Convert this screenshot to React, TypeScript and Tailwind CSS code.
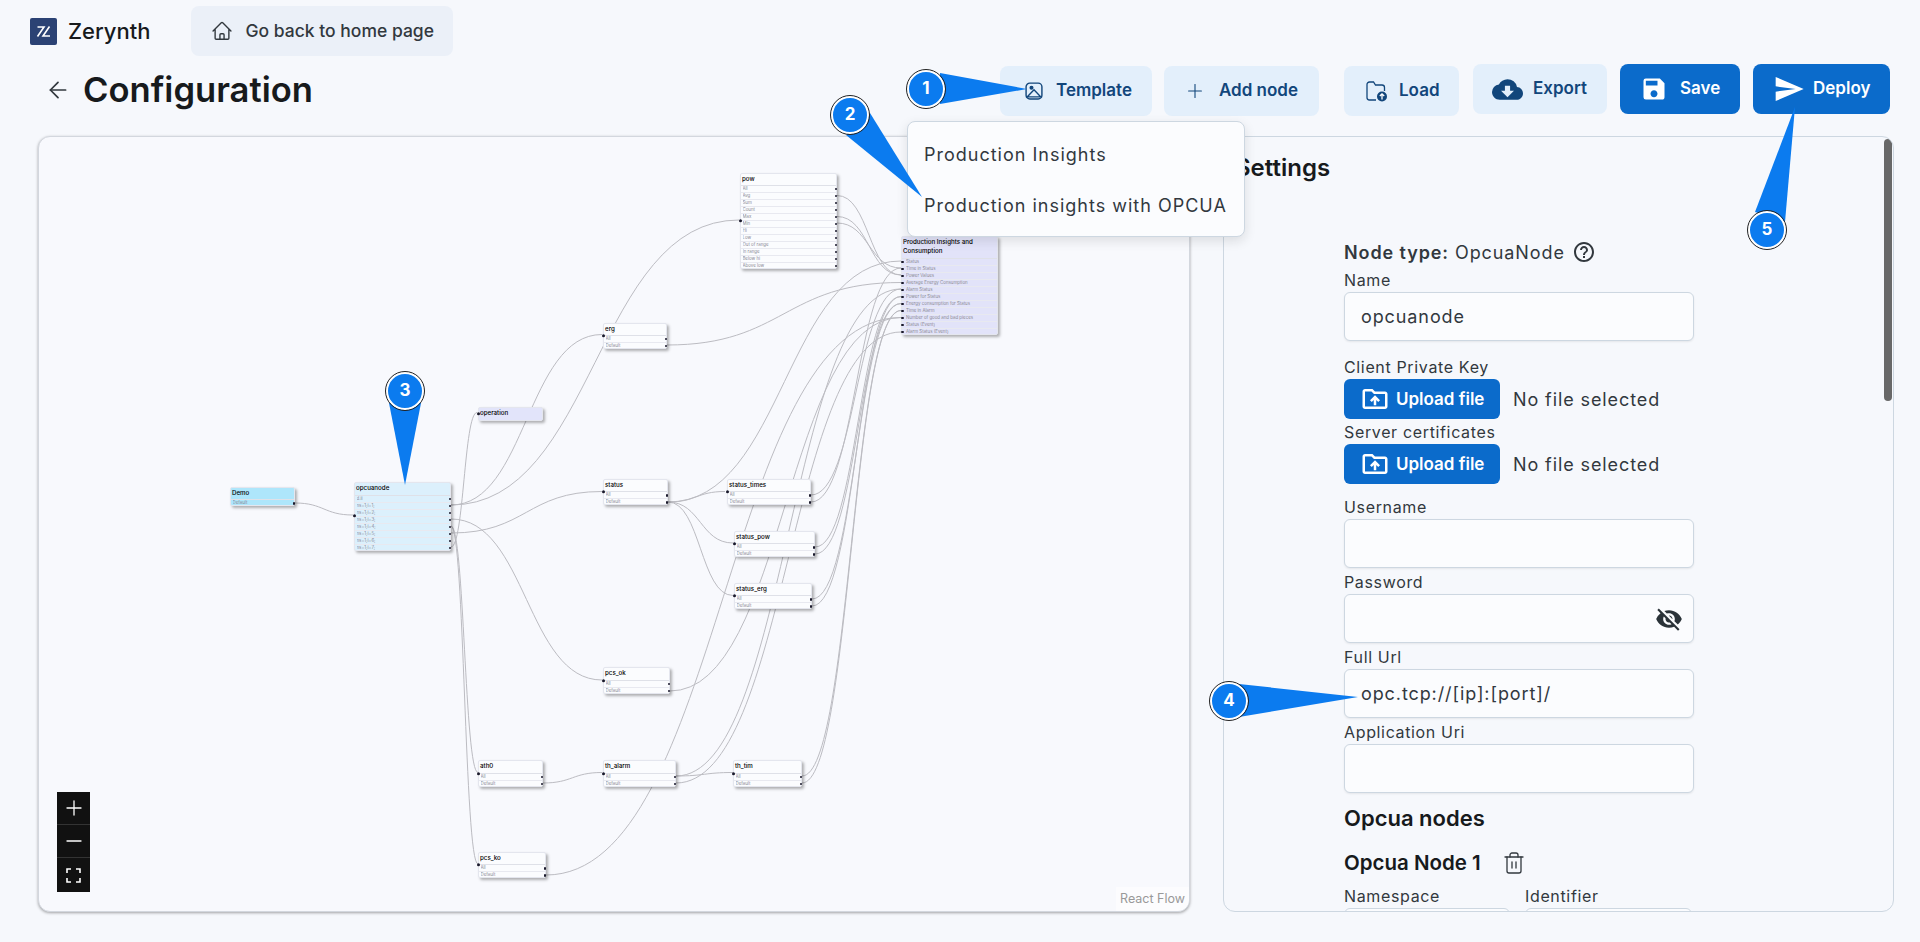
import React from "react";
import { ArrowLeft, Plus, Minus, Trash2 } from "lucide-react";
import { HiOutlineHome } from "react-icons/hi2";
import {
  MdCloudDownload,
  MdSave,
  MdSend,
  MdOutlineDriveFolderUpload,
  MdVisibilityOff,
  MdHelpOutline,
} from "react-icons/md";

type FlowNode = {
  name: string;
  x: number;
  y: number;
  w: number;
  head: number;
  rows: string[];
  tone: string;
  inY?: number;
  rowInputs?: boolean;
};

const allDefault = ["All", "Default"];

const nodes: FlowNode[] = [
  { name: "Demo", x: 230, y: 487, w: 65, head: 12, rows: ["Default"], tone: "bg-[#aee6fb]", inY: -1 },
  {
    name: "opcuanode",
    x: 354,
    y: 482,
    w: 97,
    head: 12.5,
    rows: ["d.ii", "ns=1;i=1;", "ns=1;i=2;", "ns=1;i=3;", "ns=1;i=4;", "ns=1;i=5;", "ns=1;i=6;", "ns=1;i=7;"],
    tone: "bg-[#dcf0fc]",
    inY: 33,
  },
  { name: "operation", x: 478, y: 407, w: 65, head: 12, rows: [], tone: "bg-[#e2e4fa]", inY: 5.5 },
  {
    name: "pow",
    x: 740,
    y: 173,
    w: 97,
    head: 11.5,
    rows: ["All", "Avg", "Sum", "Count", "Max", "Min", "Hi", "Low", "Out of range", "In range", "Below hi", "Above low"],
    tone: "bg-[#fbfcfe]",
    inY: 47,
  },
  { name: "erg", x: 603, y: 323, w: 64, head: 11.5, rows: allDefault, tone: "bg-[#fbfcfe]" },
  { name: "status", x: 603, y: 479, w: 65, head: 12, rows: allDefault, tone: "bg-[#fbfcfe]" },
  { name: "status_times", x: 727, y: 479, w: 84, head: 12, rows: allDefault, tone: "bg-[#fbfcfe]" },
  { name: "status_pow", x: 734, y: 531, w: 81, head: 12, rows: allDefault, tone: "bg-[#fbfcfe]" },
  { name: "status_erg", x: 734, y: 583, w: 78, head: 12, rows: allDefault, tone: "bg-[#fbfcfe]" },
  { name: "pcs_ok", x: 603, y: 667, w: 67, head: 12.5, rows: allDefault, tone: "bg-[#fbfcfe]" },
  { name: "ath0", x: 478, y: 760, w: 65, head: 12.5, rows: allDefault, tone: "bg-[#fbfcfe]" },
  { name: "th_alarm", x: 603, y: 760, w: 73, head: 12.5, rows: allDefault, tone: "bg-[#fbfcfe]" },
  { name: "th_tim", x: 733, y: 760, w: 69, head: 12.5, rows: allDefault, tone: "bg-[#fbfcfe]" },
  { name: "pcs_ko", x: 478, y: 852, w: 68, head: 12, rows: allDefault, tone: "bg-[#fbfcfe]" },
  {
    name: "Production Insights and Consumption",
    x: 901,
    y: 236,
    w: 97,
    head: 21.5,
    rows: [
      "Status",
      "Time in Status",
      "Power Values",
      "Average Energy Consumption",
      "Alarm Status",
      "Power for Status",
      "Energy consumption for Status",
      "Time in Alarm",
      "Number of good and bad pieces",
      "Status (Event)",
      "Alarm Status (Event)",
    ],
    tone: "bg-[#e2e3f9]",
    inY: -1,
    rowInputs: true,
  },
];

// source x, source y, target x, target y
const edges: number[][] = [
  [295, 503, 353, 515],
  [451, 505, 739, 220],
  [451, 505, 602, 334.5],
  [451, 533, 602, 491.5],
  [451, 519, 602, 680],
  [451, 547, 477, 412.5],
  [451, 526, 478, 772.5],
  [451, 526, 478, 864],
  [837, 195.5, 901, 275],
  [837, 216.5, 901, 275],
  [837, 223, 901, 268],
  [667, 345, 901, 282.5],
  [668, 502, 725, 491.5],
  [668, 502, 733, 543],
  [668, 502, 733, 595.5],
  [668, 502, 901, 261],
  [811, 495, 901, 289],
  [811, 502, 901, 268],
  [815, 547, 901, 296.5],
  [815, 554, 901, 303.5],
  [812, 599, 901, 303.5],
  [812, 606, 901, 296.5],
  [670, 691, 901, 317.5],
  [546, 875, 901, 317.5],
  [543, 783, 602, 772.5],
  [676, 776, 733, 772.5],
  [676, 783, 901, 332],
  [676, 776, 901, 289],
  [802, 776, 901, 310.5],
  [802, 783, 901, 310.5],
];

function edgePath([sx, sy, tx, ty]: number[]) {
  const off = (tx - sx) * 0.5;
  return `M${sx},${sy} C${sx + off},${sy} ${tx - off},${ty} ${tx},${ty}`;
}

const Dot = ({ className }: { className: string }) => (
  <span className={`absolute rounded-full bg-[#1a192b] ${className}`} />
);

const Node = ({ n }: { n: FlowNode }) => (
  <div
    className={`absolute rounded-[2px] border-[0.5px] border-[#e4e6ee] shadow-[2px_2px_3px_rgba(0,0,0,0.3)] ${n.tone}`}
    style={{ left: n.x - 39, top: n.y - 137, width: n.w }}
  >
    <div
      className={`px-[1px] text-[6.2px] leading-[9px] font-medium text-black ${n.rows.length ? "border-b border-[#dfe1e8]" : ""}`}
      style={{ height: n.head }}
    >
      {n.name}
    </div>
    {n.rows.map((r, i) => (
      <div
        key={r}
        className={`relative text-[4.4px] leading-[6px] text-[#8a8a94] ${i === n.rows.length - 1 ? "h-[5px]" : "h-[7px] border-b border-[#e8e9f0]"} ${n.rowInputs ? "pl-[4px]" : "pl-[1.5px]"}`}
      >
        <span className="block h-full overflow-hidden">{r}</span>
        {n.rowInputs ? (
          <Dot className="top-[2px] -left-[1px] size-[2.5px]" />
        ) : (
          <Dot className="top-[2px] -right-[1px] size-[2.5px]" />
        )}
      </div>
    ))}
    {n.inY !== -1 && (
      <span
        className="absolute -left-[2px] size-[3.4px] -translate-y-1/2 rounded-full bg-[#1a192b]"
        style={{ top: n.inY ?? n.head }}
      />
    )}
  </div>
);

const callouts = [
  { n: 1, x: 926, y: 89, tail: "940,73 1027,89 940,104" },
  { n: 2, x: 850, y: 115, tail: "870,113 922,197 846,135" },
  { n: 3, x: 405, y: 391, tail: "389,403 405,485 421,403" },
  { n: 4, x: 1229, y: 701, tail: "1239,684 1358,697 1239,717" },
  { n: 5, x: 1767, y: 230, tail: "1755,212 1795,107 1785,222" },
];

const Input = ({ value, children }: { value?: string; children?: React.ReactNode }) => (
  <div className="flex h-[49px] w-[350px] items-center justify-between rounded-[6px] border border-[#cdd7e1] bg-[#fbfcfe] px-[16px] text-[18px] tracking-[0.9px] text-[#32383e] shadow-[0_1px_2px_rgba(21,21,21,0.08)]">
    <span>{value}</span>
    {children}
  </div>
);

const Label = ({ children, className = "" }: { children: React.ReactNode; className?: string }) => (
  <div className={`h-[24px] text-[16px] leading-[24px] tracking-[0.65px] text-[#32383e] ${className}`}>{children}</div>
);

const UploadRow = () => (
  <div className="flex h-[40px] items-center gap-[13px]">
    <div className="flex h-[40px] w-[156px] items-center gap-[6px] rounded-[6px] bg-[#0b6bcb] pl-[16px] text-[17px] font-semibold text-white">
      <MdOutlineDriveFolderUpload size={30} />
      <span className="pt-[1px]">Upload file</span>
    </div>
    <span className="text-[18px] tracking-[0.9px] text-[#32383e]">No file selected</span>
  </div>
);

const softBtn =
  "flex h-[50px] items-center rounded-[8px] bg-[#e3effb] text-[17px] font-semibold text-[#12467b]";
const solidBtn =
  "flex mt-[-2px] h-[50px] items-center rounded-[8px] bg-[#0b6bcb] text-[17px] font-semibold text-white";

export default function App() {
  return (
    <div className="relative h-[942px] w-[1920px] overflow-hidden bg-[#f6f8fc] font-['Inter',sans-serif] text-[#171a1c]">
      {/* top bar */}
      <header className="flex h-[62px] items-center pl-[30px]">
        <svg width="27" height="27" viewBox="0 0 27 27" className="shrink-0">
          <rect width="27" height="27" rx="2" fill="#2b4274" />
          <path d="M7.5 9 H14 L7.5 18.5 M19.5 8.5 L13 18 H20" fill="none" stroke="#fff" strokeWidth="1.6" />
        </svg>
        <span className="ml-[11px] text-[22px] font-medium">Zerynth</span>
        <div className="ml-[40px] flex h-[50px] w-[262px] items-center gap-[13px] rounded-[8px] bg-[#ebf0f8] pl-[20px] text-[17.5px] font-medium text-[#32383e]">
          <HiOutlineHome size={22} />
          <span>Go back to home page</span>
        </div>
      </header>

      {/* title + actions */}
      <div className="mt-[4px] flex h-[50px] items-center pl-[45px]">
        <ArrowLeft size={26} strokeWidth={1.6} className="mb-[3px] text-[#32383e]" />
        <h1 className="mb-[3px] ml-[12px] text-[34.6px] font-semibold">Configuration</h1>
        <div className="mr-[30px] ml-auto flex items-start">
          <div className={`${softBtn} w-[152px] gap-[12px] pl-[24px]`}>
            <svg width="20" height="20" viewBox="0 0 24 24" fill="none" stroke="currentColor" strokeWidth="1.7">
              <rect x="2.5" y="2.5" width="19" height="19" rx="4.5" />
              <circle cx="9" cy="8" r="1.6" fill="currentColor" />
              <path d="M4 19 L12 10.5 L20 19 Z" />
            </svg>
            <span>Template</span>
          </div>
          <div className={`${softBtn} ml-[12px] w-[155px] gap-[13px] pl-[20px]`}>
            <Plus size={22} strokeWidth={1.2} />
            <span>Add node</span>
          </div>
          <div className={`${softBtn} ml-[25px] w-[115px] gap-[11px] pl-[22px]`}>
            <svg width="22" height="21" viewBox="0 0 22 21" fill="none" stroke="currentColor" strokeWidth="1.3">
              <path d="M10 19 H3.5 A2.5 2.5 0 0 1 1 16.5 V3.5 A2.5 2.5 0 0 1 3.5 1 H7.5 L9.5 4 H16 A2.5 2.5 0 0 1 18.5 6.5 V10" />
              <circle cx="16" cy="15.5" r="5" fill="currentColor" stroke="none" />
              <path d="M16 18.5 V13 M13.8 15 L16 12.8 L18.2 15" stroke="#fff" />
            </svg>
            <span>Load</span>
          </div>
          <div className={`${softBtn} mt-[-2px] ml-[14px] w-[134px] gap-[10px] pl-[19px]`}>
            <MdCloudDownload size={31} />
            <span>Export</span>
          </div>
          <div className={`${solidBtn} ml-[13px] w-[120px] gap-[12px] pl-[20px]`}>
            <MdSave size={28} />
            <span>Save</span>
          </div>
          <div className={`${solidBtn} ml-[13px] w-[137px] gap-[8px] pl-[20px]`}>
            <MdSend size={32} />
            <span>Deploy</span>
          </div>
        </div>
      </div>

      {/* main */}
      <main className="mt-[20px] flex h-[776px] gap-[33px] pl-[38px]">
        <section className="relative h-full w-[1152px] overflow-hidden rounded-[12px] border border-[#d3d7de] bg-[#f8f9fd] shadow-[0_1px_3px_rgba(0,0,0,0.35)]">
          <svg className="absolute -top-px -left-px" width="1152" height="776" viewBox="38 136 1152 776" fill="none">
            {edges.map((e, i) => (
              <path key={i} d={edgePath(e)} stroke="#bcbcc2" strokeWidth="1" />
            ))}
          </svg>
          {nodes.map((n) => (
            <Node key={n.name} n={n} />
          ))}

          <div className="absolute top-[655px] left-[18px] flex w-[33px] flex-col bg-[#111] text-white">
            <div className="flex h-[33px] items-center justify-center border-b border-[#333]">
              <Plus size={24} strokeWidth={1.3} />
            </div>
            <div className="flex h-[33px] items-center justify-center border-b border-[#333]">
              <Minus size={24} strokeWidth={1.3} />
            </div>
            <div className="flex h-[34px] items-center justify-center">
              <svg width="15" height="15" viewBox="0 0 15 15" fill="none" stroke="#fff" strokeWidth="1.6">
                <path d="M1 5 V1 H5 M10 1 H14 V5 M14 10 V14 H10 M5 14 H1 V10" />
              </svg>
            </div>
          </div>

          <div className="absolute right-0 bottom-0 bg-white/50 px-[4px] py-[4px] text-[12.5px] leading-[16px] text-[#999]">
            React Flow
          </div>
        </section>

        <aside className="relative h-full w-[671px] overflow-hidden rounded-[12px] border border-[#cdd7e1]">
          <div className="absolute top-[2px] right-[1px] h-[262px] w-[8px] rounded-full bg-[#686868]" />
          <h2 className="mt-[15px] ml-[11px] h-[32px] text-[24px] leading-[32px] font-semibold">Settings</h2>
          <div className="mt-[56px] ml-[120px]">
            <div className="flex h-[24px] items-center text-[18px] tracking-[0.9px] text-[#32383e]">
              <b className="font-semibold">Node type:</b>
              <span className="ml-[6px]">OpcuaNode</span>
              <MdHelpOutline size={24} className="ml-[7px]" />
            </div>
            <Label className="mt-[4px]">Name</Label>
            <Input value="opcuanode" />
            <Label className="mt-[14px]">Client Private Key</Label>
            <UploadRow />
            <Label className="mt-[1px]">Server certificates</Label>
            <UploadRow />
            <Label className="mt-[11px]">Username</Label>
            <Input />
            <Label className="mt-[2px]">Password</Label>
            <Input>
              <MdVisibilityOff size={28} className="-mr-[6px] text-[#2a3238]" />
            </Input>
            <Label className="mt-[2px]">Full Url</Label>
            <Input value="opc.tcp://[ip]:[port]/" />
            <Label className="mt-[2px]">Application Uri</Label>
            <Input />
            <h3 className="mt-[11px] h-[28px] text-[22px] leading-[28px] font-semibold">Opcua nodes</h3>
            <div className="mt-[19px] flex h-[24px] items-center gap-[21px] text-[20.5px] font-semibold">
              <span>Opcua Node 1</span>
              <Trash2 size={24} strokeWidth={1.3} className="text-[#32383e]" />
            </div>
            <div className="mt-[9px] flex gap-[15px]">
              <div>
                <Label>Namespace</Label>
                <div className="h-[49px] w-[166px] rounded-[6px] border border-[#cdd7e1] bg-[#fbfcfe]" />
              </div>
              <div>
                <Label>Identifier</Label>
                <div className="h-[49px] w-[167px] rounded-[6px] border border-[#cdd7e1] bg-[#fbfcfe]" />
              </div>
            </div>
          </div>
        </aside>
      </main>

      {/* template menu */}
      <div className="absolute top-[121px] left-[907px] flex h-[116px] w-[338px] flex-col justify-center gap-[21px] rounded-[8px] border border-[#cdd7e1] bg-[#fbfcfe] pt-[2px] pl-[16px] text-[18px] tracking-[1px] text-[#32383e] shadow-[0_4px_12px_rgba(21,21,21,0.12)]">
        <div className="leading-[30px]">Production Insights</div>
        <div className="leading-[30px]">Production insights with OPCUA</div>
      </div>

      {/* numbered annotations */}
      <svg className="pointer-events-none absolute inset-0" width="1920" height="942" fill="#0b7bef">
        {callouts.map((c) => (
          <polygon key={c.n} points={c.tail} />
        ))}
      </svg>
      {callouts.map((c) => (
        <div
          key={c.n}
          className="absolute flex size-[38px] -translate-x-1/2 -translate-y-1/2 items-center justify-center rounded-full border-2 border-white bg-[#0b7bef] text-[17px] font-bold text-white outline-1 outline-[#222]"
          style={{ left: c.x, top: c.y }}
        >
          {c.n}
        </div>
      ))}
    </div>
  );
}
